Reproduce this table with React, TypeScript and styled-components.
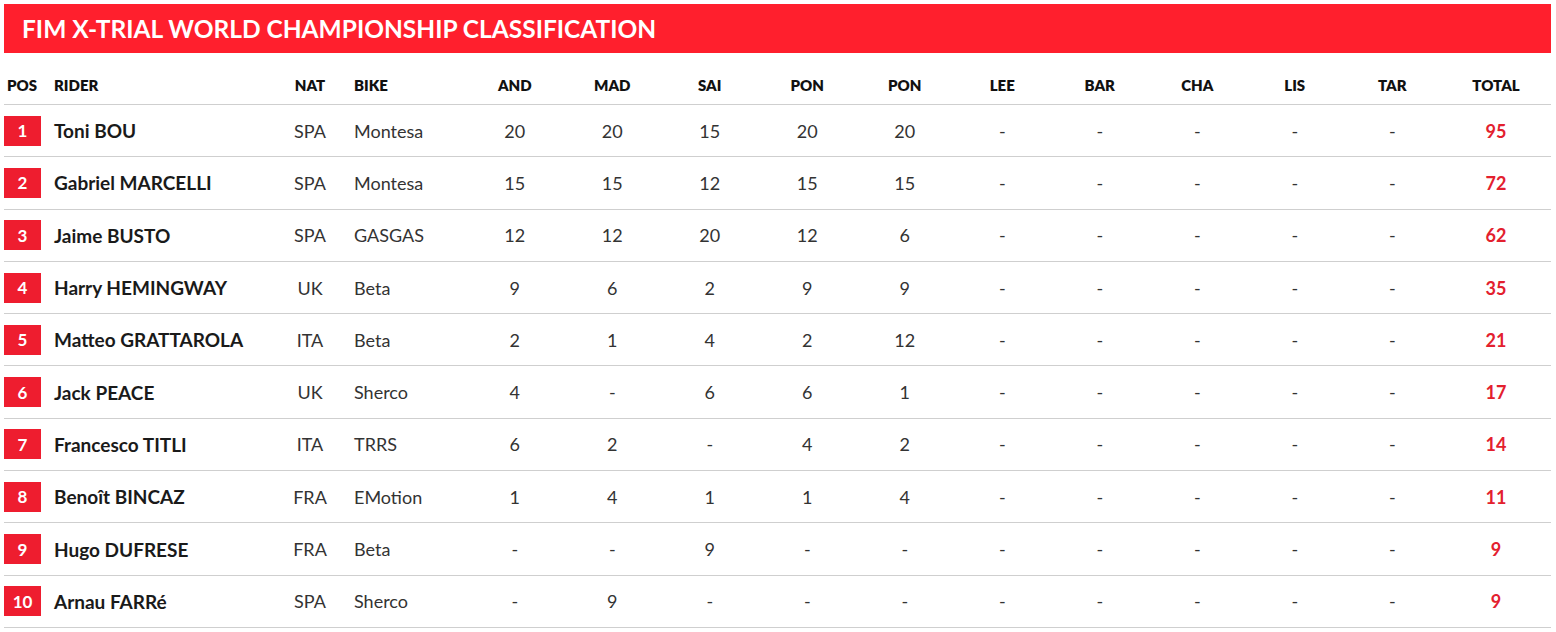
import React from "react";
import styled, { createGlobalStyle } from "styled-components";

const GlobalStyle = createGlobalStyle`
    body {
        margin: 0;
        background: #fff;
        font-family: Lato, "Open Sans", sans-serif;
    }
`;

const RED = "#ff1f2d";

interface Rider {
    pos: number;
    name: string;
    nat: string;
    bike: string;
    results: string[];
    total: number;
}

const EVENTS = ["AND", "MAD", "SAI", "PON", "PON", "LEE", "BAR", "CHA", "LIS", "TAR"];

const fill = (r: string[]) => [...r, ...Array(EVENTS.length - r.length).fill("-")];

const riders: Rider[] = [
    { pos: 1, name: "Toni BOU", nat: "SPA", bike: "Montesa", results: fill(["20", "20", "15", "20", "20"]), total: 95 },
    { pos: 2, name: "Gabriel MARCELLI", nat: "SPA", bike: "Montesa", results: fill(["15", "15", "12", "15", "15"]), total: 72 },
    { pos: 3, name: "Jaime BUSTO", nat: "SPA", bike: "GASGAS", results: fill(["12", "12", "20", "12", "6"]), total: 62 },
    { pos: 4, name: "Harry HEMINGWAY", nat: "UK", bike: "Beta", results: fill(["9", "6", "2", "9", "9"]), total: 35 },
    { pos: 5, name: "Matteo GRATTAROLA", nat: "ITA", bike: "Beta", results: fill(["2", "1", "4", "2", "12"]), total: 21 },
    { pos: 6, name: "Jack PEACE", nat: "UK", bike: "Sherco", results: fill(["4", "-", "6", "6", "1"]), total: 17 },
    { pos: 7, name: "Francesco TITLI", nat: "ITA", bike: "TRRS", results: fill(["6", "2", "-", "4", "2"]), total: 14 },
    { pos: 8, name: "Benoît BINCAZ", nat: "FRA", bike: "EMotion", results: fill(["1", "4", "1", "1", "4"]), total: 11 },
    { pos: 9, name: "Hugo DUFRESE", nat: "FRA", bike: "Beta", results: fill(["-", "-", "9", "-", "-"]), total: 9 },
    { pos: 10, name: "Arnau FARRé", nat: "SPA", bike: "Sherco", results: fill(["-", "9", "-", "-", "-"]), total: 9 },
];

const Page = styled.div`
    padding: 4px 5px 4px 4px;
`;

const TitleBar = styled.div`
    background: ${RED};
    height: 49px;
    display: flex;
    align-items: center;
    padding-left: 18px;
    color: #fff;
    font-size: 24.5px;
    font-weight: 700;
`;

const Table = styled.table`
    width: 1547px;
    border-collapse: collapse;
    table-layout: fixed;
`;

const Th = styled.th<{ $align?: "left" | "center"; $indent?: number }>`
    height: 41px;
    padding: 0 0 10px ${({ $indent }) => $indent ?? 0}px;
    vertical-align: bottom;
    text-align: ${({ $align }) => $align ?? "center"};
    font-size: 15px;
    font-weight: 800;
    color: #111;
    border-bottom: 1px solid #cfcfcf;
`;

const Tr = styled.tr`
    height: 52.3px;
    & td {
        border-bottom: 1px solid #cfcfcf;
    }
`;

const Td = styled.td<{ $align?: "left" | "center"; $indent?: number }>`
    padding: 0 0 0 ${({ $indent }) => $indent ?? 0}px;
    text-align: ${({ $align }) => $align ?? "center"};
    font-size: 18px;
    color: #333;
`;

const Name = styled(Td)`
    font-size: 19px;
    font-weight: 700;
    color: #1a1a1a;
`;

const Total = styled(Td)`
    font-size: 18px;
    font-weight: 700;
    color: #e3202e;
`;

const Badge = styled.span`
    display: flex;
    align-items: center;
    justify-content: center;
    width: 37px;
    height: 30px;
    background: #ee1d2f;
    color: #fff;
    font-size: 17px;
    font-weight: 700;
`;

export default function App() {
    return (
        <Page>
            <GlobalStyle />
            <TitleBar>FIM X-TRIAL WORLD CHAMPIONSHIP CLASSIFICATION</TitleBar>
            <Table>
                <colgroup>
                    <col style={{ width: 46 }} />
                    <col style={{ width: 220 }} />
                    <col style={{ width: 80 }} />
                    <col style={{ width: 116 }} />
                    {EVENTS.map((_, i) => (
                        <col key={i} style={{ width: 97.5 }} />
                    ))}
                    <col />
                </colgroup>
                <thead>
                    <tr>
                        <Th $align="left" $indent={3}>POS</Th>
                        <Th $align="left" $indent={4}>RIDER</Th>
                        <Th>NAT</Th>
                        <Th $align="left" $indent={4}>BIKE</Th>
                        {EVENTS.map((e, i) => (
                            <Th key={i}>{e}</Th>
                        ))}
                        <Th>TOTAL</Th>
                    </tr>
                </thead>
                <tbody>
                    {riders.map((r) => (
                        <Tr key={r.pos}>
                            <Td $align="left">
                                <Badge>{r.pos}</Badge>
                            </Td>
                            <Name $align="left" $indent={4}>{r.name}</Name>
                            <Td>{r.nat}</Td>
                            <Td $align="left" $indent={4}>{r.bike}</Td>
                            {r.results.map((v, i) => (
                                <Td key={i}>{v}</Td>
                            ))}
                            <Total>{r.total}</Total>
                        </Tr>
                    ))}
                </tbody>
            </Table>
        </Page>
    );
}
